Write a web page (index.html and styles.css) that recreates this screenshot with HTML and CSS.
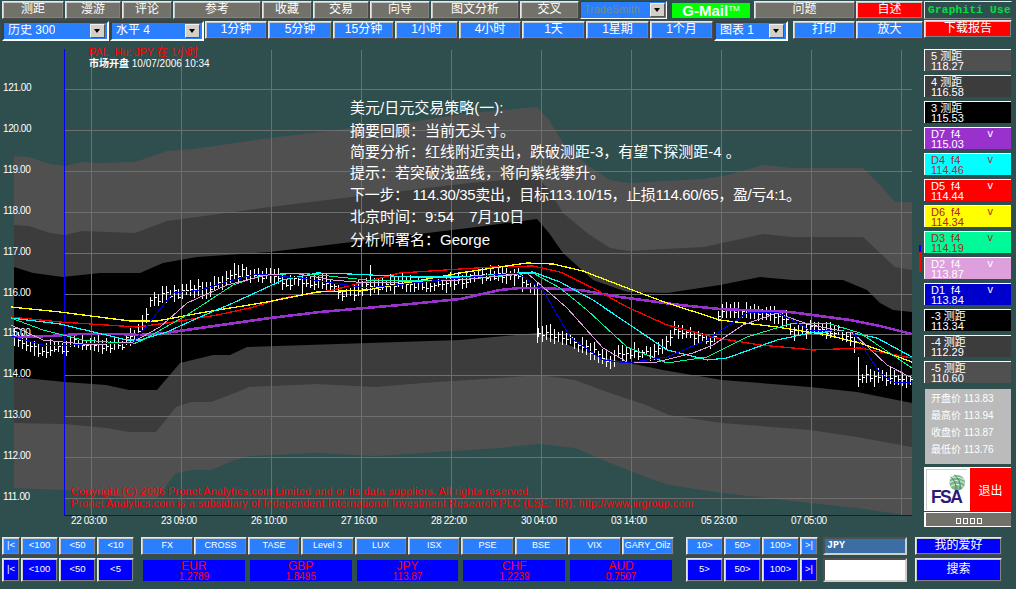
FILE: index.html
```html
<!DOCTYPE html>
<html lang="zh">
<head>
<meta charset="utf-8">
<title>Graphiti</title>
<link rel="stylesheet" href="styles.css">
</head>
<body>
<div class="app">
  <div class="row row-one">
    <button class="btn gray">测距</button>
    <button class="btn gray">漫游</button>
    <button class="btn gray">评论</button>
    <button class="btn gray">参考</button>
    <button class="btn gray">收藏</button>
    <button class="btn gray">交易</button>
    <button class="btn gray">向导</button>
    <button class="btn gray mr2">图文分析</button>
    <button class="btn gray mr4">交叉</button>
    <div class="select select-small mr4"><span class="select-text muted">TradeSmith</span><span class="select-arrow"></span></div>
    <div class="gmail mr3">G-Mail<sup>TM</sup></div>
    <button class="btn gray">问题</button>
    <button class="btn red mr5">自述</button>
    <div class="user">Graphiti User</div>
  </div>
  <div class="row row-two">
    <div class="select"><span class="select-text">历史 300</span><span class="select-arrow"></span></div>
    <div class="select"><span class="select-text">水平 4</span><span class="select-arrow"></span></div>
    <button class="btn blue">1分钟</button>
    <button class="btn blue">5分钟</button>
    <button class="btn blue">15分钟</button>
    <button class="btn blue">1小时</button>
    <button class="btn blue">4小时</button>
    <button class="btn blue">1天</button>
    <button class="btn blue">1星期</button>
    <button class="btn blue">1个月</button>
    <div class="select mr4"><span class="select-text">图表 1</span><span class="select-arrow"></span></div>
    <button class="btn blue">打印</button>
    <button class="btn blue mr5">放大</button>
    <button class="btn red report">下载报告</button>
  </div>
  <div class="main">
    <svg class="chart" viewBox="0 41 918 490" width="918" height="490" role="img" aria-label="USD/JPY chart">
      <path class="band light" d="M14 156L29 157 50 164 65 166 82 162 97 163 135 162 167 151 194 149 270 138 352 128 411 122 470 113 537 107 549 120 563 143 587 165 610 180 628 183 704 179 728 175 763 165 792 168 863 168 880 185 895 202 912 202 912 516 857 508 810 503 722 493 669 485 646 477 610 463 575 448 540 444 499 448 423 453 376 456 317 453 249 456 235 460 211 470 191 470 176 473 156 499 129 498 106 495 65 490 14 488Z"/>
      <path class="band mid" d="M14 225L29 226 50 233 65 235 82 231 135 233 167 221 270 207 352 197 470 183 537 177 549 190 563 213 587 233 610 248 628 251 704 247 763 234 792 237 863 237 880 253 895 267 912 270 912 447 857 437 810 430 722 423 669 415 646 405 610 393 575 380 540 375 499 378 423 383 376 387 317 384 249 387 235 393 211 402 191 402 176 407 156 432 129 432 106 428 65 424 14 423Z"/>
      <path class="band black" d="M14 267L33 273 63 277 100 273 140 273 163 263 197 257 270 252 352 242 469 228 537 219 549 233 563 253 593 280 627 292 667 293 720 285 760 277 793 280 843 280 867 290 880 303 893 310 912 312 912 403 857 392 810 387 722 380 663 370 600 357 537 333 460 340 247 347 230 355 213 355 180 363 157 390 129 390 106 385 65 382 14 377Z"/>
      <path class="grid" d="M64 89H912M64 130H912M64 171H912M64 212H912M64 253H912M64 294H912M64 334H912M64 375H912M64 416H912M64 457H912M64 498H912M91 49V515M181 49V515M271 49V515M361 49V515M451 49V515M541 49V515M631 49V515M721 49V515M811 49V515M901 49V515"/>
      <path class="frame" d="M64.5 49V515.5H912"/>
      <path id="bars" class="bars"/>
      <polyline class="line purple" points="14,337 50,336 80,334 120,334 140,335 165,333 200,328 270,318 320,312 400,305 460,299 500,290 520,288 540,288 580,290 620,297 680,305 720,309 790,312 850,320 880,326 912,334"/>
      <polyline class="line red-line" points="11,317 60,322 137,327 167,323 217,315 250,308 283,298 333,290 400,273 460,269 493,267 533,266 560,272 593,288 627,307 667,325 717,338 760,345 793,348 813,350 860,348 912,358"/>
      <polyline class="line yellow" points="11,307 60,312 130,321 157,321 200,313 267,302 317,292 367,290 460,273 493,268 527,263 553,264 583,271 627,288 667,303 720,320 777,327 827,335 860,343 912,362"/>
      <polyline class="line cyan" points="11,318 60,324 127,340 140,340 167,332 200,317 233,303 283,280 317,273 350,274 413,277 460,277 533,272 560,282 593,300 627,323 667,350 707,360 727,358 777,340 810,333 843,331 877,338 912,357"/>
      <polyline class="line green" points="11,318 43,330 83,340 133,344 143,340 187,315 233,285 260,276 300,273 367,280 460,280 533,273 560,288 587,310 627,347 667,363 707,357 747,337 793,323 827,323 860,333 912,368"/>
      <polyline class="line plum" points="11,325 43,340 93,345 133,342 160,327 187,303 227,285 267,275 293,273 333,280 367,283 460,280 527,273 567,308 603,348 627,362 653,363 693,353 713,345 743,325 777,313 810,325 853,333 887,365 912,378"/>
      <polyline class="line navy" points="11,336 43,345 63,346 93,343 133,343 173,293 200,290 233,280 257,274 300,278 333,283 367,288 460,278 517,273 543,290 570,337 603,360 627,363 667,357 707,340 747,313 777,312 810,330 853,332 880,373 893,382 912,383"/>
      <g class="axis">
        <text x="3" y="91">121.00</text><text x="3" y="132">120.00</text><text x="3" y="173">119.00</text><text x="3" y="214">118.00</text><text x="3" y="255">117.00</text><text x="3" y="296">116.00</text><text x="3" y="336">115.00</text><text x="3" y="377">114.00</text><text x="3" y="418">113.00</text><text x="3" y="459">112.00</text><text x="3" y="500">111.00</text>
        <text x="71" y="524">22 03:00</text><text x="161" y="524">23 09:00</text><text x="251" y="524">26 10:00</text><text x="341" y="524">27 16:00</text><text x="431" y="524">28 22:00</text><text x="521" y="524">30 04:00</text><text x="611" y="524">03 14:00</text><text x="701" y="524">05 23:00</text><text x="791" y="524">07 05:00</text>
      </g>
      <text class="title" x="89" y="56" textLength="109">PAL_Hu: JPY 在 1小时</text>
      <text class="stamp" x="89" y="67"><tspan class="stamp-bold">市场开盘</tspan> 10/07/2006 10:34</text>
      <g class="note">
        <text x="350" y="113">美元/日元交易策略(一):</text>
        <text x="350" y="136">摘要回顾：当前无头寸。</text>
        <text x="350" y="157">简要分析：红线附近卖出，跌破测距-3，有望下探测距-4 。</text>
        <text x="350" y="178">提示：若突破浅蓝线，将向紫线攀升。</text>
        <text x="350" y="200" textLength="451">下一步： 114.30/35卖出，目标113.10/15，止损114.60/65，盈/亏4:1。</text>
        <text x="350" y="222">北京时间：9:54　7月10日</text>
        <text x="350" y="245">分析师署名：George</text>
      </g>
      <text class="legal" x="71" y="495" textLength="460">Copyright (C) 2006 Pronet Analytics.com Limited and or its data suppliers.  All rights reserved.</text>
      <text class="legal" x="71" y="507" textLength="622">Pronet Analytics.com is a subsidiary of Independent International Investment Research PLC (LSE: IIR). http://www.iirgroup.com</text>
    </svg>
    <div class="scroll-mark"><span class="mark-blue"></span><span class="mark-red"></span></div>
    <aside class="side">
      <div class="card c-light"><span>5 测距</span><span>118.27</span></div>
      <div class="card c-mid"><span>4 测距</span><span>116.58</span></div>
      <div class="card c-black"><span>3 测距</span><span>115.53</span></div>
      <div class="card c-purple"><span class="card-head">D7 f4<i>v</i></span><span>115.03</span></div>
      <div class="card c-cyan"><span class="card-head">D4 f4<i>v</i></span><span>114.46</span></div>
      <div class="card c-red"><span class="card-head">D5 f4<i>v</i></span><span>114.44</span></div>
      <div class="card c-yellow"><span class="card-head">D6 f4<i>v</i></span><span>114.34</span></div>
      <div class="card c-green"><span class="card-head">D3 f4<i>v</i></span><span>114.19</span></div>
      <div class="card c-plum"><span class="card-head">D2 f4<i>v</i></span><span>113.87</span></div>
      <div class="card c-navy"><span class="card-head">D1 f4<i>v</i></span><span>113.84</span></div>
      <div class="card c-black"><span>-3 测距</span><span>113.34</span></div>
      <div class="card c-mid"><span>-4 测距</span><span>112.29</span></div>
      <div class="card c-light"><span>-5 测距</span><span>110.60</span></div>
      <div class="summary">
        <div>开盘价 113.83</div>
        <div>最高价 113.94</div>
        <div>收盘价 113.87</div>
        <div>最低价 113.76</div>
      </div>
      <div class="brand">
        <div class="fsa">
          <svg viewBox="0 0 41 41" width="41" height="41" aria-label="FSA">
            <circle cx="31" cy="13" r="8" fill="#7fb58f"/>
            <path d="M24 9Q31 5 38 10M23 13Q31 8 39 14M24 17Q31 12 38 18" fill="none" stroke="#d8ecd8" stroke-width="1.1"/>
            <path d="M24 7Q30 11 30 21M28 5Q35 10 34 20" fill="none" stroke="#3e8a5a" stroke-width="1"/>
            <text class="fsa-text" x="4" y="34">FSA</text>
          </svg>
        </div>
        <button class="quit">退出</button>
      </div>
      <div class="tray"><span></span><span></span><span></span><span></span></div>
    </aside>
  </div>
  <div class="bottom">
    <div class="nav nav-left">
      <button class="btn blue small">|&lt;</button><button class="btn blue small">&lt;100</button><button class="btn blue small">&lt;50</button><button class="btn blue small">&lt;10</button>
      <button class="btn pure small">|&lt;</button><button class="btn pure small">&lt;100</button><button class="btn pure small">&lt;50</button><button class="btn pure small">&lt;5</button>
    </div>
    <div class="markets">
      <div class="market-tabs">
        <button class="btn blue small">FX</button><button class="btn blue small">CROSS</button><button class="btn blue small">TASE</button><button class="btn blue small">Level 3</button><button class="btn blue small">LUX</button><button class="btn blue small">ISX</button><button class="btn blue small">PSE</button><button class="btn blue small">BSE</button><button class="btn blue small">VIX</button><button class="btn blue small">GARY_Oilz</button>
      </div>
      <div class="quotes">
        <div class="quote"><b>EUR</b><span>1.2789</span></div>
        <div class="quote"><b>GBP</b><span>1.8495</span></div>
        <div class="quote"><b>JPY</b><span>113.87</span></div>
        <div class="quote"><b>CHF</b><span>1.2239</span></div>
        <div class="quote"><b>AUD</b><span>0.7507</span></div>
      </div>
    </div>
    <div class="nav nav-right">
      <button class="btn blue small">10&gt;</button><button class="btn blue small">50&gt;</button><button class="btn blue small">100&gt;</button><button class="btn blue small">&gt;|</button>
      <button class="btn pure small">5&gt;</button><button class="btn pure small">50&gt;</button><button class="btn pure small">100&gt;</button><button class="btn pure small">&gt;|</button>
    </div>
    <div class="inputs">
      <div class="field field-symbol">JPY</div>
      <div class="field field-empty"></div>
    </div>
    <div class="actions">
      <button class="btn pure">我的爱好</button>
      <button class="btn pure">搜索</button>
    </div>
  </div>
</div>
<script src="chart.js"></script>
</body>
</html>
```
FILE: styles.css
```css
* { box-sizing: border-box; }
html, body { margin: 0; padding: 0; background: #2f4f4f; }
body { font-family: "Liberation Sans", "Noto Sans CJK SC", sans-serif; color: #fff; }
.app { width: 1016px; height: 589px; overflow: hidden; background: #2f4f4f; display: flex; flex-direction: column; }

.row { display: grid; column-gap: 1px; padding-left: 2px; align-items: start; flex: none; }
.row-one { height: 21px; padding-top: 1px; grid-template-columns: 62px 56px 50px 88px 50px 56px 60px 88px 59px 91px 81px 101px 67px 92px; }
.row-two { height: 20px; grid-template-columns: 107px 94px 62px 64px 61px 63px 62px 63px 63px 63px 78px 62px 67px 92px; }
.mr2 { margin-right: 2px; }
.mr3 { margin-right: 3px; }
.mr4 { margin-right: 4px; }
.mr5 { margin-right: 5px; }

.btn {
  display: flex; align-items: center; justify-content: center;
  height: 18px; padding: 0 0 2px; margin: 0; overflow: hidden; white-space: nowrap;
  font: 12px/1 "Liberation Sans", "Noto Sans CJK SC", sans-serif; color: #fff;
  border: 1px solid; border-color: #e8e8e8 #4a4a4a #4a4a4a #e8e8e8;
  box-shadow: inset 1px 1px 0 #c8c8c8, inset -1px -1px 0 #808080;
}
.gray { background: #72726a; }
.blue { background: #2a7fff; }
.pure { background: #0000ff; }
.red { background: #ff0000; }
.small { font-size: 9.5px; height: auto; }
.report { height: 18px; margin-top: -1px; margin-right: 4px; border-color: #e8e8e8 #2f4f4f #2f4f4f #e8e8e8; }

.select {
  display: flex; align-items: center; justify-content: space-between; height: 20px; padding: 1px 2px;
  background: #2a7fff; border: 2px solid; border-color: #404040 #fff #fff #404040;
  font-size: 12px; line-height: 1;
}
.select-small { height: 18px; font-size: 10.5px; border-width: 1px; padding: 1px; }
.select-text { padding: 0 0 2px 2px; white-space: nowrap; overflow: hidden; }
.muted { color: #7a8a7a; letter-spacing: .2px; }
.select-arrow {
  position: relative; width: 15px; height: 14px; background: #d4d0c8; flex: none;
  border: 1px solid; border-color: #f0f0f0 #555 #555 #f0f0f0;
}
.select-arrow::after {
  content: ""; position: absolute; left: 3px; top: 4px;
  border-style: solid; border-width: 4px 3.5px 0; border-color: #000 transparent transparent;
}
.gmail {
  height: 15px; margin-top: 2px; background: #00ff00; text-align: center;
  font: bold 15px/15px "Liberation Sans", sans-serif; color: #fff;
}
.gmail sup { font-size: 8px; font-weight: normal; line-height: 0; vertical-align: 5px; }
.user {
  height: 18px; margin-right: 4px; overflow: hidden; white-space: nowrap; padding: 2px 0 0 3px;
  background: #2f4f4f; color: #00e040; font: bold 11px/13px "Liberation Mono", monospace;
  border: 1px solid; border-color: #e8e8e8 #2f4f4f #808080 #e8e8e8; letter-spacing: .3px;
}

.main { display: flex; height: 490px; flex: none; }
.chart { display: block; flex: none; }
.band.light { fill: #505050; }
.band.mid { fill: #3c3c3c; }
.band.black { fill: #000; }
.grid { fill: none; stroke: #6e6e6e; stroke-width: 1; shape-rendering: crispEdges; transform: translate(0, .5px); }
.frame { fill: none; stroke: #0000ff; stroke-width: 1; shape-rendering: crispEdges; }
.bars { fill: none; stroke: #fff; stroke-width: 1; shape-rendering: crispEdges; }
.line { fill: none; stroke-width: 1; stroke-linejoin: round; shape-rendering: crispEdges; }
.purple { stroke: #9932cc; stroke-width: 2.6; }
.red-line { stroke: #ff0000; stroke-width: 1.3; }
.yellow { stroke: #ffff00; stroke-width: 1.3; }
.cyan { stroke: #00ffff; stroke-width: 1.2; }
.green { stroke: #00fa9a; }
.plum { stroke: #dda0dd; }
.navy { stroke: #0000ee; }
.axis text { fill: #fff; font: 10px "Liberation Sans", sans-serif; letter-spacing: -.4px; }
.title { fill: #ff0000; font: 11px "Liberation Sans", "Noto Sans CJK SC", sans-serif; }
.stamp { fill: #fff; font: 10px "Liberation Sans", "Noto Sans CJK SC", sans-serif; }
.stamp-bold { font-weight: bold; }
.note text { fill: #fff; font: 15px "Liberation Sans", "Noto Sans CJK SC", sans-serif; }
.legal { fill: #ff0000; font: 10.5px "Liberation Sans", sans-serif; }

.scroll-mark { width: 6px; flex: none; padding: 204px 0 0 1px; }
.scroll-mark span { display: block; width: 2px; }
.mark-blue { height: 7px; background: #0000ff; }
.mark-red { height: 20px; background: #ff0000; }

.side { width: 87px; flex: none; padding-top: 8px; display: flex; flex-direction: column; }
.card {
  height: 22px; margin-bottom: 4px; padding: 0 0 0 6px; display: flex; flex-direction: column; justify-content: center;
  border-top: 1px solid #fff; border-left: 1px solid #fff; font: 11px/10px "Liberation Sans", "Noto Sans CJK SC", sans-serif;
}
.card span { display: block; white-space: nowrap; }
.card-head { position: relative; word-spacing: 3px; }
.card-head i { position: absolute; right: 18px; top: -1px; font-style: normal; }
.c-light { background: #505050; }
.c-mid { background: #3c3c3c; }
.c-black { background: #000; }
.c-purple { background: #9932cc; }
.c-cyan { background: #00ffff; color: #c0203c; }
.c-red { background: #ff0000; }
.c-yellow { background: #ffff00; color: #b22222; }
.c-green { background: #00fa9a; color: #b22222; }
.c-plum { background: #dda0dd; }
.c-navy { background: #0000cd; }
.summary {
  height: 75px; margin: 2px 0 3px 1px; padding-top: 1px; background: #bbb;
  font: 10px/17px "Liberation Sans", "Noto Sans CJK SC", sans-serif; color: #fff; white-space: nowrap;
}
.summary div { padding-left: 6px; }
.brand { display: grid; grid-template-columns: 44px 43px; height: 44px; }
.fsa { background: #fff; padding: 2px 0 0 2px; overflow: hidden; }
.fsa svg { display: block; border-top: 1px solid #ccc; border-left: 1px solid #ccc; }
.fsa-text { font: bold 18px "Liberation Sans", sans-serif; fill: #2d1a78; letter-spacing: -1.6px; }
.quit {
  margin: 0; padding: 0; background: #ff0000; color: #fff; border: 0; border-top: 1px solid #fff; border-left: 2px solid #fff;
  font: 12px "Noto Sans CJK SC", sans-serif;
}
.tray {
  height: 15px; margin-top: 1px; padding: 3px 0 0; background: #72726a; border: 2px solid #fff; border-width: 1px 0 1px 2px;
  display: flex; justify-content: center; align-items: center; gap: 2px;
}
.tray span { width: 5px; height: 6px; border: 1px solid #fff; }

.bottom { display: flex; padding: 6px 0 0 2px; }
.nav, .inputs, .actions, .markets { display: grid; grid-template-rows: 18px 24px; row-gap: 3px; flex: none; }
.nav { column-gap: 1px; grid-template-columns: 18px 37px 37px 37px; }
.nav-left { width: 132px; }
.nav-right { width: 133px; margin-left: 12px; grid-template-columns: 37px 37px 37px 18px; }
.markets { width: 533px; margin-left: 7px; }
.market-tabs { display: grid; grid-template-columns: repeat(10, 1fr); column-gap: 1px; }
.market-tabs .btn { font-size: 9px; }
.quotes { display: grid; grid-template-columns: repeat(5, 1fr); column-gap: 5px; padding: 2px 2px 1px; }
.quote {
  background: #0000ff; color: #ff0000; text-align: center; display: flex; flex-direction: column; align-items: center; justify-content: center;
  font: 10px/9px "Liberation Sans", sans-serif;
}
.quote b { font-weight: normal; font-size: 12px; line-height: 12px; }
.inputs { width: 84px; margin-left: 4px; }
.field { border: 2px solid; border-color: #505050 #d0d0c8 #d0d0c8 #505050; }
.field-symbol { background: #3a6ea5; font: bold 10px/14px "Liberation Mono", monospace; padding-left: 2px; }
.field-empty { background: #fff; }
.actions { width: 87px; margin-left: 8px; }
.actions .btn { height: auto; }
```
FILE: chart.js
```js
// Price bars: centre path of the series, with a fixed pseudo-random spread.
var anchors = [[14,340],[25,343],[40,350],[50,347],[65,349],[75,340],[85,345],[100,345],[120,344],[130,340],[140,325],[150,305],[160,297],[175,292],[200,290],[215,285],[235,272],[260,275],[285,280],[300,285],[320,282],[345,295],[365,285],[400,283],[430,285],[460,280],[480,275],[500,273],[517,275],[525,285],[535,290],[537,335],[550,332],[565,338],[575,345],[590,352],[605,360],[612,365],[618,350],[630,352],[650,352],[665,345],[675,328],[690,335],[705,340],[712,345],[717,320],[725,308],[745,311],[770,312],[785,320],[795,333],[810,328],[830,330],[845,335],[855,345],[858,375],[875,378],[895,377],[912,380]];
var seed = 7;
function rnd() { seed = (seed * 16807) % 2147483647; return seed / 2147483647; }
function centre(x) {
  for (var i = 1; i < anchors.length; i++) {
    if (x <= anchors[i][0]) {
      var a = anchors[i - 1], b = anchors[i];
      return a[1] + (b[1] - a[1]) * (x - a[0]) / (b[0] - a[0]);
    }
  }
  return anchors[anchors.length - 1][1];
}
var d = "";
for (var x = 14; x < 912; x += 4) {
  var c = centre(x) + (rnd() - .5) * 6;
  var half = 4 + rnd() * 5;
  var hi = Math.round(c - half), lo = Math.round(c + half), close = Math.round(c + (rnd() - .5) * 6);
  d += "M" + (x + .5) + " " + hi + "V" + lo + "M" + (x + .5) + " " + close + "H" + (x + 3);
}
d += "M537.5 283V343M858.5 357V387M370.5 265V296";
document.getElementById("bars").setAttribute("d", d);
```
